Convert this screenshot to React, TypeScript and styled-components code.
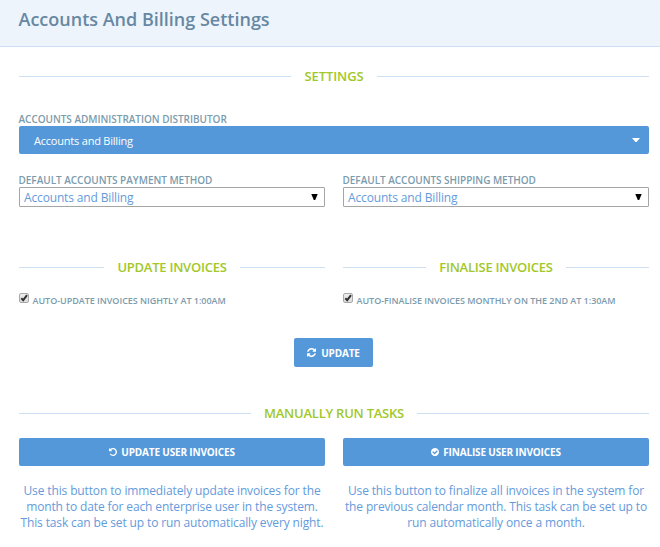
import React from "react";
import styled, { createGlobalStyle } from "styled-components";

const GlobalStyle = createGlobalStyle`
  *, *::before, *::after { box-sizing: border-box; }
  body {
    margin: 0;
    background: #fff;
    color: #5498da;
    font-family: "Open Sans", "Noto Sans", sans-serif;
    font-size: 13px;
  }
`;

const Page = styled.div`
  height: 547px;
  overflow: hidden;
`;

const Header = styled.header`
  height: 47px;
  padding: 7px 18px 0 18.5px;
  background: #eef4fc;
  border-bottom: 1px solid #cee1f4;
`;

const Title = styled.h1`
  margin: 0;
  color: #6788a2;
  font-size: 18px;
  font-weight: 600;
  line-height: 25px;
  white-space: nowrap;
`;

const Content = styled.main`
  padding: 19px 11px 0 19px;
`;

const Columns = styled.div`
  display: grid;
  grid-template-columns: 306px 306px;
  column-gap: 18px;
`;

const Legend = styled.h2<{ $track?: number }>`
  display: flex;
  align-items: center;
  gap: 13.5px;
  height: 20px;
  margin: 0;
  color: #9fc82a;
  font-size: 13px;
  font-weight: 600;
  letter-spacing: ${(p) => p.$track ?? -0.08}px;
  white-space: nowrap;
  &::before, &::after {
    content: "";
    flex: 1;
    height: 1px;
    background: #cee1f4;
  }
`;

const Label = styled.div`
  height: 14px;
  margin-left: -0.5px;
  color: #7b9bad;
  font-size: 10px;
  font-weight: 600;
  line-height: 15px;
  letter-spacing: -0.03px;
  white-space: nowrap;
`;

const Field = styled.div<{ $top: number }>`
  margin-top: ${(p) => p.$top}px;
`;

const Dropdown = styled.div`
  display: flex;
  align-items: center;
  justify-content: space-between;
  height: 28px;
  padding: 0 9px 0 15px;
  border-radius: 2px;
  background: #5498da;
  color: #fff;
  font-size: 11px;
  letter-spacing: -0.21px;
`;

const NativeSelect = styled.div`
  display: flex;
  align-items: center;
  justify-content: space-between;
  height: 20px;
  padding: 0 6px 0 4px;
  border: 1px solid #a5a5a5;
  border-radius: 1px;
  color: #649bdb;
  font-size: 12px;
  line-height: 18px;
  letter-spacing: -0.15px;
  span { padding-top: 2px; }
`;

const Row = styled.div`
  display: flex;
  gap: 4px;
  height: 16px;
  margin-top: 15px;
`;

const CheckSlot = styled.span`
  display: block;
  flex: none;
  width: 10px;
  height: 10px;
  margin-top: 1px;
  border: 1px solid #a9a9a9;
  border-radius: 2px;
  background: linear-gradient(#eeeeee, #dddddd);
  svg { display: block; overflow: visible; }
`;

const CheckText = styled(Label)`
  margin-top: 1px;
  font-size: 9px;
  line-height: 16px;
`;

const Button = styled.button<{ $wide?: boolean }>`
  display: flex;
  align-items: center;
  justify-content: center;
  gap: ${(p) => (p.$wide ? 4 : 5)}px;
  width: ${(p) => (p.$wide ? "100%" : "79px")};
  height: ${(p) => (p.$wide ? 28 : 29)}px;
  margin: ${(p) => (p.$wide ? "0" : "30px 0 0 275px")};
  padding: 0;
  border: 0;
  border-radius: 2px;
  background: #5498da;
  color: #fff;
  font-family: inherit;
  font-size: 10px;
  font-weight: 700;
  letter-spacing: -0.16px;
  white-space: nowrap;
`;

const Help = styled.p`
  margin: 17px -10px 0;
  color: #649bdb;
  font-size: 12px;
  line-height: 16px;
  letter-spacing: -0.13px;
  text-align: center;
  white-space: nowrap;
`;

const Section = styled.section<{ $top: number }>`
  margin-top: ${(p) => p.$top}px;
`;

const icons = {
  refresh:
    "M1639 1056q0 5-1 7-64 268-268 434.5t-478 166.5q-146 0-282.5-55t-243.5-157l-129 129q-19 19-45 19t-45-19-19-45v-448q0-26 19-45t45-19h448q26 0 45 19t19 45-19 45l-137 137q71 66 161 102t187 36q134 0 250-65t186-179q11-17 53-117 8-23 30-23h192q13 0 22.5 9.5t9.5 22.5zm25-800v448q0 26-19 45t-45 19h-448q-26 0-45-19t-19-45 19-45l138-138q-148-137-349-137-134 0-250 65t-186 179q-11 17-53 117-8 23-30 23h-199q-13 0-22.5-9.5t-9.5-22.5v-7q65-268 270-434.5t480-166.5q146 0 284 55.5t245 156.5l130-129q19-19 45-19t45 19 19 45z",
  undo:
    "M1664 896q0 156-61 298t-164 245-245 164-298 61q-172 0-327-72.5t-264-204.5q-7-10-6.5-22.5t8.5-20.5l137-138q10-9 25-9 16 2 23 12 73 95 179 147t225 52q104 0 198.5-40.5t163.5-109.5 109.5-163.5 40.5-198.5-40.5-198.5-109.5-163.5-163.5-109.5-198.5-40.5q-98 0-188 35.5t-160 101.5l137 138q31 30 14 69-17 40-59 40h-448q-26 0-45-19t-19-45v-448q0-42 40-59 39-17 69 14l130 129q107-101 244.5-156.5t284.5-55.5q156 0 298 61t245 164 164 245 61 298z",
  check:
    "M1412 734q0-28-18-46l-91-90q-19-19-45-19t-45 19l-408 407-226-226q-19-19-45-19t-45 19l-91 90q-18 18-18 46 0 27 18 45l362 362q19 19 45 19 27 0 46-19l543-543q18-18 18-45zm252 162q0 209-103 385.5t-279.5 279.5-385.5 103-385.5-103-279.5-279.5-103-385.5 103-385.5 279.5-279.5 385.5-103 385.5 103 279.5 279.5 103 385.5z",
};

function Icon({ name, size }: { name: keyof typeof icons; size: number }) {
  return (
    <svg width={size} height={size} viewBox="128 128 1536 1536" fill="currentColor" aria-hidden>
      <path d={icons[name]} />
    </svg>
  );
}

function Select({ label }: { label: string }) {
  return (
    <Field $top={19}>
      <Label>{label}</Label>
      <NativeSelect>
        <span>Accounts and Billing</span>
        <svg width="7" height="7" viewBox="0 0 7 7"><path d="M0.3 0H6.7L4.2 6H2.8Z" fill="#000" /></svg>
      </NativeSelect>
    </Field>
  );
}

function Check({ label }: { label: string }) {
  return (
    <Row>
      <CheckSlot>
        <svg width="8" height="8" viewBox="0 0 8 8">
          <path d="M1.3 4.3L3.2 6.2L7 1.2" fill="none" stroke="#333" strokeWidth="2" />
        </svg>
      </CheckSlot>
      <CheckText>{label}</CheckText>
    </Row>
  );
}

export default function App() {
  return (
    <Page>
      <GlobalStyle />
      <Header>
        <Title>Accounts And Billing Settings</Title>
      </Header>
      <Content>
        <Legend>SETTINGS</Legend>
        <Field $top={26}>
          <Label>ACCOUNTS ADMINISTRATION DISTRIBUTOR</Label>
          <Dropdown>
            <span>Accounts and Billing</span>
            <svg width="8" height="4" viewBox="0 0 8 4"><path d="M0 0H8L4.6 4H3.4Z" fill="#fff" /></svg>
          </Dropdown>
        </Field>
        <Columns>
          <Select label="DEFAULT ACCOUNTS PAYMENT METHOD" />
          <Select label="DEFAULT ACCOUNTS SHIPPING METHOD" />
        </Columns>
        <Section $top={50}>
          <Columns>
            <div>
              <Legend $track={-0.24}>UPDATE INVOICES</Legend>
              <Check label="AUTO-UPDATE INVOICES NIGHTLY AT 1:00AM" />
            </div>
            <div>
              <Legend $track={-0.24}>FINALISE INVOICES</Legend>
              <Check label="AUTO-FINALISE INVOICES MONTHLY ON THE 2ND AT 1:30AM" />
            </div>
          </Columns>
        </Section>
        <Button><Icon name="refresh" size={9} />UPDATE</Button>
        <Section $top={36}>
          <Legend $track={-0.24}>MANUALLY RUN TASKS</Legend>
        </Section>
        <Section $top={15}>
          <Columns>
            <div>
              <Button $wide><Icon name="undo" size={8} />UPDATE USER INVOICES</Button>
              <Help>
                Use this button to immediately update invoices for the<br />
                month to date for each enterprise user in the system.<br />
                This task can be set up to run automatically every night.
              </Help>
            </div>
            <div>
              <Button $wide><Icon name="check" size={8} />FINALISE USER INVOICES</Button>
              <Help>
                Use this button to finalize all invoices in the system for<br />
                the previous calendar month. This task can be set up to<br />
                run automatically once a month.
              </Help>
            </div>
          </Columns>
        </Section>
      </Content>
    </Page>
  );
}
